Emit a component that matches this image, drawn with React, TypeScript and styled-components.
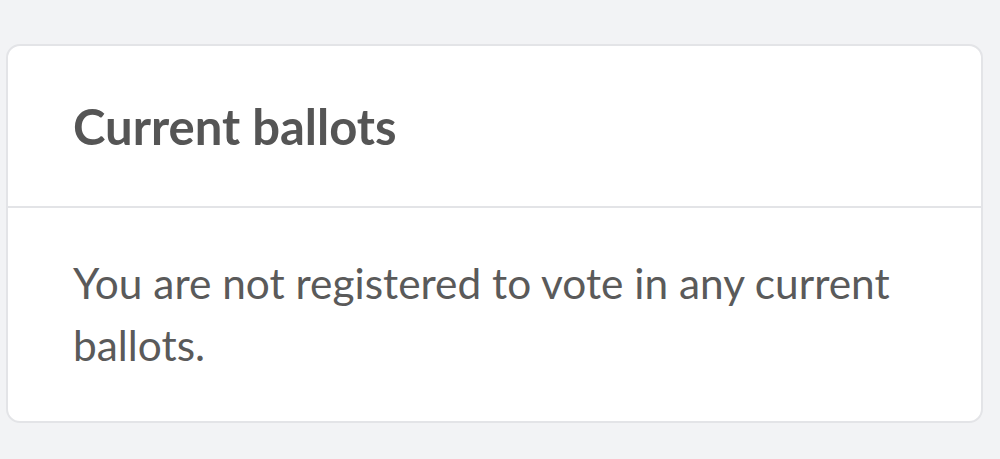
import React from 'react';
import styled, { createGlobalStyle } from 'styled-components';

const GlobalStyle = createGlobalStyle`
  html, body {
    margin: 0;
    padding: 0;
    background: #f2f3f5;
    font-family: Lato, "Open Sans", sans-serif;
  }
`;

const Page = styled.div`
  width: 1000px;
  height: 459px;
  box-sizing: border-box;
  padding: 44px 17px 0 6px;
`;

const Card = styled.section`
  background: #ffffff;
  border: 2px solid #e3e4e7;
  border-radius: 14px;
  overflow: hidden;
`;

const CardHeader = styled.header`
  height: 162px;
  box-sizing: border-box;
  padding: 0 65px;
  display: flex;
  align-items: center;
  border-bottom: 2px solid #e3e4e7;
`;

const Title = styled.h2`
  margin: 0;
  font-size: 49px;
  font-weight: 700;
  color: #555555;
`;

const CardBody = styled.div`
  padding: 44px 65px 45px;
`;

const Message = styled.p`
  margin: 0;
  font-size: 42.4px;
  line-height: 62px;
  color: #5a5a5a;
`;

export default function App() {
  return (
    <Page>
      <GlobalStyle />
      <Card>
        <CardHeader>
          <Title>Current ballots</Title>
        </CardHeader>
        <CardBody>
          <Message>You are not registered to vote in any current ballots.</Message>
        </CardBody>
      </Card>
    </Page>
  );
}
